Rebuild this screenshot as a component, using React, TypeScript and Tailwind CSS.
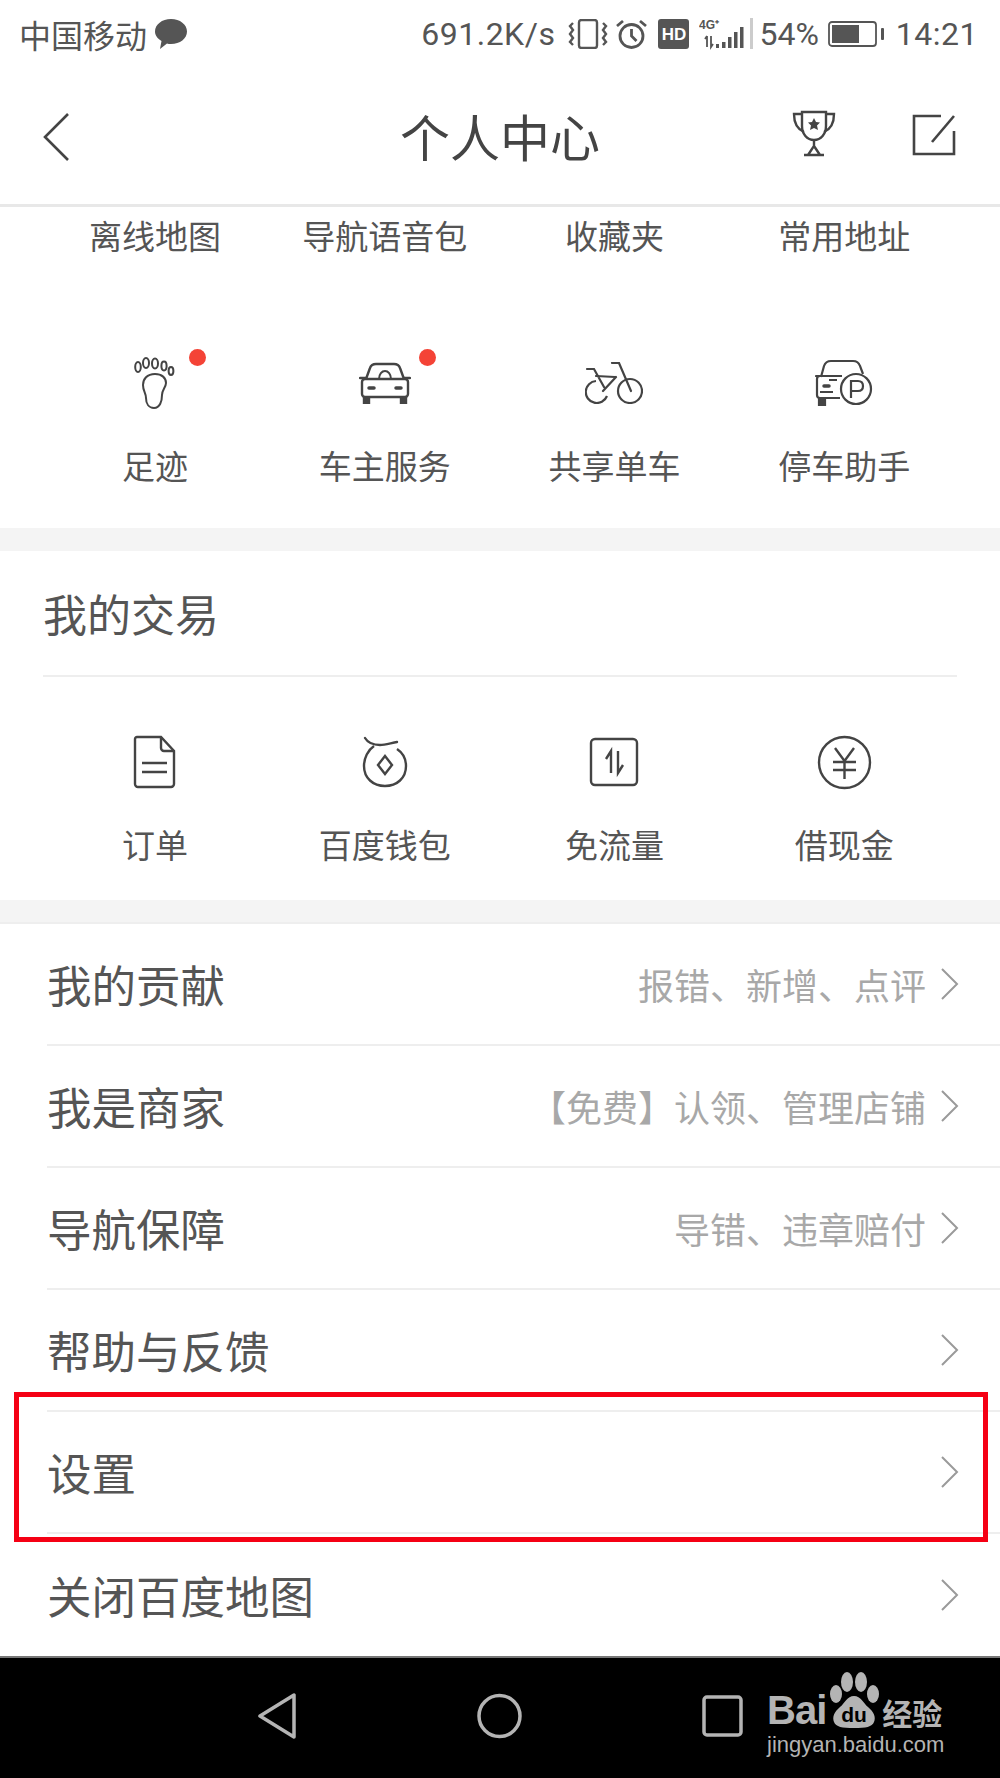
const cjk = "font-['Noto_Sans_CJK_SC','Noto_Sans',sans-serif]";

function FootIcon() {
  return (
    <svg width="42" height="52" viewBox="0 0 42 52" fill="none" stroke="#444" strokeWidth="2">
      <ellipse cx="4" cy="10" rx="2.8" ry="5" />
      <ellipse cx="12" cy="6" rx="3" ry="5" />
      <ellipse cx="21" cy="6.5" rx="3" ry="5" />
      <ellipse cx="30" cy="9" rx="2.6" ry="4.4" />
      <ellipse cx="37" cy="14" rx="2.4" ry="4" />
      <path d="M21 17c-8 0-12 5-12 11 0 6 3 8 3 13 0 6 3 10 8 10 6 0 8-7 8-13 0-5 4-8 4-12 0-5-4-9-11-9z" />
    </svg>
  );
}

function CarIcon() {
  return (
    <svg width="52" height="42" viewBox="0 0 52 42" fill="none" stroke="#444" strokeWidth="2.4">
      <path d="M7 17l4-11c1-3 3-4 6-4h18c3 0 5 1 6 4l4 11" />
      <path d="M1 16h6M45 16h6" strokeLinecap="round" />
      <rect x="3" y="17" width="46" height="18" rx="3" />
      <path d="M5 35v6h5v-6M42 35v6h5v-6" fill="#444" />
      <path d="M20 17c0-5 3-8 6-8s6 3 6 8" strokeWidth="2" />
      <path d="M10 26h5M37 26h5" strokeLinecap="round" strokeWidth="3.500" />
    </svg>
  );
}

function BikeIcon() {
  return (
    <svg width="58" height="42" viewBox="0 0 58 42" fill="none" stroke="#444" strokeWidth="2.200">
      <path d="M11 19a11 11 0 1 0 11 15" />
      <circle cx="45" cy="29" r="12" />
      <path d="M2 7h7l10 18M11 14l19 1M27 1h7l12 28M31 15L18 29" strokeLinecap="round" />
    </svg>
  );
}

function ParkIcon() {
  return (
    <svg width="58" height="48" viewBox="0 0 58 48" fill="none" stroke="#444" strokeWidth="2.200">
      <path d="M6 18l3-11c1-3 3-5 7-5h22c4 0 6 2 7 5l3 8" />
      <path d="M1 17h6" strokeLinecap="round" />
      <path d="M27 17H5c-2 0-3 1-3 3v16c0 2 1 3 3 3h20" />
      <path d="M4 39v7h6v-7" fill="#444" />
      <path d="M9 27h5" strokeLinecap="round" strokeWidth="3.500" />
      <path d="M5 33h13M14 21h8" />
      <circle cx="41" cy="30" r="15" />
      <path d="M36 39V22h7c3 0 5 2 5 5s-2 5-5 5h-7" />
    </svg>
  );
}

function OrderIcon() {
  return (
    <svg width="44" height="54" viewBox="0 0 44 54" fill="none" stroke="#444" strokeWidth="2.400">
      <path d="M4 2h24l13 14v33a3 3 0 0 1-3 3H5a3 3 0 0 1-3-3V4a2 2 0 0 1 2-2z" />
      <path d="M28 2v11a3 3 0 0 0 3 3h10" />
      <path d="M9 28h25M9 37h25" />
    </svg>
  );
}

function WalletIcon() {
  return (
    <svg width="46" height="52" viewBox="0 0 46 52" fill="none" stroke="#444" strokeWidth="2.400">
      <path d="M3 2c3 5 9 7 15 7 5 0 11-2 17-3" strokeLinecap="round" />
      <path d="M12 10C6 14 2 22 2 30c0 12 9 20 21 20s21-8 21-20c0-7-3-13-9-17" />
      <path d="M23 20l7 9-7 9-7-9z" />
    </svg>
  );
}

function FlowIcon() {
  return (
    <svg width="50" height="50" viewBox="0 0 50 50" fill="none" stroke="#444" strokeWidth="2.400">
      <rect x="2" y="2" width="46" height="46" rx="4" />
      <path d="M22 36V14l-5 8M29 14v22l5-8" />
    </svg>
  );
}

function YenIcon() {
  return (
    <svg width="55" height="55" viewBox="0 0 55 55" fill="none" stroke="#444" strokeWidth="2.400">
      <circle cx="27.500" cy="27.500" r="25.500" />
      <path d="M18 13l9.500 13L37 13M16 27h23M16 35h23M27.500 26v18" />
    </svg>
  );
}

function Chevron() {
  return (
    <svg width="20" height="32" viewBox="0 0 20 32" fill="none" stroke="#9a9a9a" strokeWidth="2">
      <path d="M2 1l15 15L2 31" />
    </svg>
  );
}

function Cell({ icon, label, dot }: { icon?: React.ReactNode; label: string; dot?: boolean }) {
  return (
    <div className="relative flex flex-col items-center">
      {icon && <div className="mb-[32px] flex h-[56px] items-center justify-center">{icon}</div>}
      {dot && <span className="absolute left-[149px] top-[-6px] h-[17px] w-[17px] rounded-full bg-[#f44336]" />}
      <div className="text-[33px] leading-[44px] text-[#555]">{label}</div>
    </div>
  );
}

function Row({ title, sub, last }: { title: string; sub?: string; last?: boolean }) {
  return (
    <div className={`ml-[47px] flex h-[122px] items-center pr-[40px] ${last ? "" : "border-b-2 border-[#eeeeee]"}`}>
      <div className="text-[44.5px] text-[#555]">{title}</div>
      {sub && <div className="ml-auto mr-[14px] text-[36px] text-[#a8a8a8]">{sub}</div>}
      <div className={sub ? "" : "ml-auto"}>
        <Chevron />
      </div>
    </div>
  );
}

export default function App() {
  return (
    <div className={`relative flex h-[1778px] w-[1000px] flex-col overflow-hidden bg-white ${cjk}`}>
      {/* status bar */}
      <div className="flex h-[70px] items-center pb-[2px] pl-[19px] pr-[22px] text-[#555]">
        <span className="text-[32px]">中国移动</span>
        <svg className="ml-[8px]" width="32" height="30" viewBox="0 0 32 30" fill="#555">
          <path d="M16 0c9 0 16 5.500 16 12.500S25 25 16 25c-1.500 0-3 0-4-.5L5 30l1.500-8C2.500 19.500 0 16.500 0 12.500 0 5.500 7 0 16 0z" />
        </svg>
        <span className="ml-auto font-['Roboto',sans-serif] text-[32px] tracking-[0.5px]">691.2K/s</span>
        <svg className="ml-[13px]" width="40" height="30" viewBox="0 0 40 30" fill="none" stroke="#555" strokeWidth="2.400">
          <rect x="11" y="1" width="18" height="28" rx="2.500" />
          <path d="M5 4l-3 3 3 4-3 4 3 4-3 4 3 3M35 4l3 3-3 4 3 4-3 4 3 4-3 3" />
        </svg>
        <svg className="ml-[8px]" width="31" height="30" viewBox="0 0 31 30" fill="none" stroke="#555" strokeWidth="2.800">
          <circle cx="15.500" cy="17" r="11.500" />
          <path d="M15.500 10v7l5 5M1 7l6-5M30 7l-6-5" />
        </svg>
        <div className="ml-[11px] flex h-[30px] w-[31px] items-center justify-center rounded-[3px] bg-[#555] font-['Liberation_Sans',sans-serif] text-[17px] font-bold leading-none text-white">
          HD
        </div>
        <svg className="ml-[10px]" width="55" height="32" viewBox="0 0 55 32" fill="#555">
          <text x="0" y="11" fontSize="12" fontWeight="700" fontFamily="Liberation Sans, sans-serif">4G⁺</text>
          <path d="M8 18v11M8 18l-2 3M12 18v11l2-3" stroke="#555" strokeWidth="1.800" fill="none" />
          <rect x="17" y="26" width="3" height="4" />
          <rect x="23" y="24" width="3.500" height="6" />
          <rect x="29" y="19" width="3.500" height="11" />
          <rect x="35" y="14" width="3.500" height="16" />
          <rect x="41" y="9" width="3.500" height="21" />
          <rect x="51" y="0" width="3" height="31" fill="#ccc" />
        </svg>
        <span className="ml-[5px] font-['Roboto',sans-serif] text-[32px] leading-none">54%</span>
        <svg className="ml-[9px]" width="57" height="26" viewBox="0 0 57 26" fill="none">
          <rect x="1" y="1" width="47" height="24" rx="3" stroke="#555" strokeWidth="1.800" />
          <rect x="4" y="4" width="27" height="18" fill="#555" />
          <rect x="53" y="7" width="3" height="12" rx="1" fill="#555" />
        </svg>
        <span className="ml-[11px] font-['Roboto',sans-serif] text-[32px] tracking-[0.5px]">14:21</span>
      </div>

      {/* header */}
      <div className="relative flex h-[137px] shrink-0 items-center justify-center border-b-[3px] border-[#e8e8e8] pb-[4px]">
        <svg className="absolute left-[43px] top-[43px]" width="26" height="48" viewBox="0 0 26 48" fill="none" stroke="#444" strokeWidth="2.600">
          <path d="M25 1L2 24l23 23" />
        </svg>
        <div className="text-[50px] text-[#444]">个人中心</div>
        <svg className="absolute left-[792px] top-[40px]" width="44" height="47" viewBox="0 0 44 47" fill="none" stroke="#444" strokeWidth="2.400">
          <path d="M10 2h24v14c0 8-5 14-12 14S10 24 10 16z" />
          <path d="M10 4H2c0 9 3 15 10 18M34 4h8c0 9-3 15-10 18" />
          <path d="M22 30v6l-6 9M22 36l6 9M12 45h20" />
          <path d="M22 8l2 4 4 .5-3 3 1 4.500-4-2-4 2 1-4.500-3-3 4-.5z" fill="#444" stroke="none" />
        </svg>
        <svg className="absolute left-[912px] top-[44px]" width="44" height="42" viewBox="0 0 44 42" fill="none" stroke="#444" strokeWidth="2.600">
          <path d="M29 2H2v38h40V17" />
          <path d="M42 2L20 28" />
        </svg>
      </div>

      {/* 常用功能 */}
      <div className="grid h-[58px] shrink-0 grid-cols-4 items-center pl-[40px] pr-[41px] pb-[2px]">
        {["离线地图", "导航语音包", "收藏夹", "常用地址"].map((t) => (
          <Cell key={t} label={t} />
        ))}
      </div>
      <div className="grid shrink-0 grid-cols-4 pl-[40px] pr-[41px] pt-[90px] pb-[41px]">
        <Cell icon={<FootIcon />} label="足迹" dot />
        <Cell icon={<CarIcon />} label="车主服务" dot />
        <Cell icon={<BikeIcon />} label="共享单车" />
        <Cell icon={<ParkIcon />} label="停车助手" />
      </div>
      <div className="h-[23px] shrink-0 bg-[#f4f4f4]" />

      {/* 我的交易 */}
      <div className="mx-[43px] flex h-[126px] shrink-0 items-center border-b-2 border-[#eeeeee] text-[44px] text-[#555]">
        我的交易
      </div>
      <div className="grid shrink-0 grid-cols-4 gap-y-0 pl-[40px] pr-[41px] pt-[57px] pb-[34px]">
        <Cell icon={<OrderIcon />} label="订单" />
        <Cell icon={<WalletIcon />} label="百度钱包" />
        <Cell icon={<FlowIcon />} label="免流量" />
        <Cell icon={<YenIcon />} label="借现金" />
      </div>
      <div className="h-[24px] shrink-0 border-b-2 border-[#eeeeee] bg-[#f4f4f4]" />

      {/* list */}
      <div className="flex-1">
        <Row title="我的贡献" sub="报错、新增、点评" />
        <Row title="我是商家" sub="【免费】认领、管理店铺" />
        <Row title="导航保障" sub="导错、违章赔付" />
        <Row title="帮助与反馈" />
        <Row title="设置" />
        <Row title="关闭百度地图" last />
      </div>

      {/* nav bar */}
      <div className="flex h-[122px] shrink-0 items-center justify-center gap-[180px] border-t-2 border-[#777] bg-black pb-[4px]">
        <svg width="39" height="46" viewBox="0 0 39 46" fill="none" stroke="#b4b4b4" strokeWidth="3.500" strokeLinejoin="round">
          <path d="M36 2v42L2 23z" />
        </svg>
        <svg width="45" height="46" viewBox="0 0 45 46" fill="none" stroke="#b4b4b4" strokeWidth="3.500">
          <circle cx="22.500" cy="23" r="20.500" />
        </svg>
        <svg width="41" height="42" viewBox="0 0 41 42" fill="none" stroke="#b4b4b4" strokeWidth="3.500">
          <rect x="2" y="2" width="37" height="38" rx="3" />
        </svg>
      </div>

      {/* 水印 */}
      <div className="absolute left-[767px] top-[1672px] w-[178px] text-[#b4b4b4]">
        <div className="flex h-[56px] items-end">
          <span className="font-['Liberation_Sans',sans-serif] text-[40px] font-bold leading-[36px] tracking-[-1px]">Bai</span>
          <svg className="ml-[2px]" width="52" height="56" viewBox="0 0 52 56" fill="#b4b4b4">
            <ellipse cx="8" cy="22" rx="6" ry="9" />
            <ellipse cx="19" cy="10" rx="6" ry="10" />
            <ellipse cx="33" cy="10" rx="6" ry="10" />
            <ellipse cx="45" cy="22" rx="6" ry="9" />
            <path d="M26 24c-7 0-9 7-14 11-6 5-8 10-6 15 2 5 8 6 20 6s18-1 20-6c2-5 0-10-6-15-5-4-7-11-14-11z" />
            <text x="26" y="50" textAnchor="middle" fontSize="21" fontWeight="700" fontFamily="Liberation Sans, sans-serif" fill="#000">du</text>
          </svg>
          <span className="ml-[2px] text-[30px] font-bold leading-[32px]">经验</span>
        </div>
        <div className="mt-[2px] font-['Liberation_Sans',sans-serif] text-[22px] leading-[30px] whitespace-nowrap">jingyan.baidu.com</div>
      </div>

      {/* 红框 */}
      <div className="absolute left-[14px] top-[1392px] h-[150px] w-[974px] border-[5px] border-[#f50014]" />
    </div>
  );
}
